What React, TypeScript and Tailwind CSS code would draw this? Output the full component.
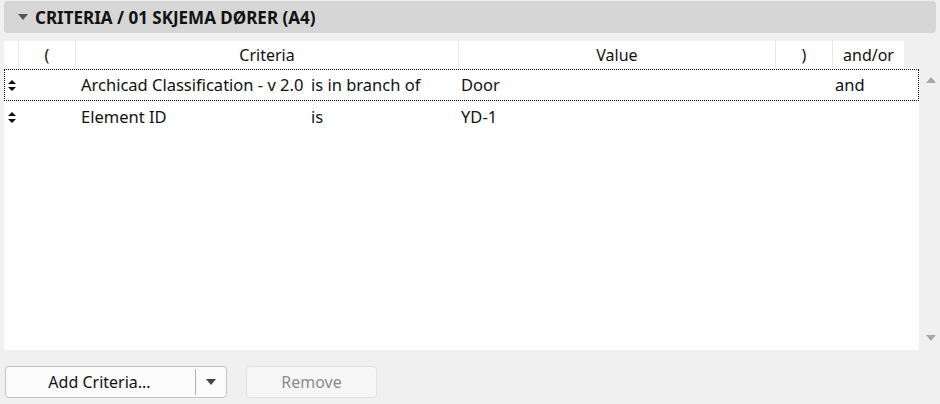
const font = { fontFamily: '"Noto Sans", "Open Sans", sans-serif' };

function SortIcon() {
  return (
    <svg width="8" height="11" viewBox="0 0 8 11" className="shrink-0">
      <path d="M4 0 L8 4 L0 4 Z" fill="#111" />
      <path d="M0 7 L8 7 L4 11 Z" fill="#111" />
    </svg>
  );
}

function Tri({ up, color = '#a8a8a8' }: { up?: boolean; color?: string }) {
  return (
    <svg width="10" height="6" viewBox="0 0 10 6">
      {up ? <path d="M5 0 L10 6 L0 6 Z" fill={color} /> : <path d="M0 0 L10 0 L5 6 Z" fill={color} />}
    </svg>
  );
}

const rows = [
  { criteria: 'Archicad Classification - v 2.0', op: 'is in branch of', value: 'Door', andor: 'and', focused: true },
  { criteria: 'Element ID', op: 'is', value: 'YD-1', andor: '', focused: false },
];

export default function App() {
  return (
    <div
      className="w-[940px] h-[404px] bg-[#f0f0f0] flex flex-col text-[16px] text-[#111] overflow-hidden"
      style={font}
    >
      <div className="px-[4px] pt-[1px]">
        <div className="h-[32px] rounded-[4px] bg-[#d6d6d6] flex items-center">
          <div className="w-[31px] flex justify-center pl-[6px]">
            <Tri color="#555" />
          </div>
          <span className="font-bold text-[17px] leading-none">CRITERIA / 01 SKJEMA DØRER (A4)</span>
        </div>
      </div>

      <div className="mt-[8px] pl-[4px] flex flex-col">
        {/* header */}
        <div className="w-[900px] h-[27px] bg-white flex items-center">
          <div className="w-[14px] h-full" />
          <div className="w-[57px] h-full border-l border-[#e6e6e6] flex items-center justify-center">(</div>
          <div className="w-[383px] h-full border-l border-[#e6e6e6] flex items-center justify-center">Criteria</div>
          <div className="w-[317px] h-full border-l border-[#e6e6e6] flex items-center justify-center">Value</div>
          <div className="w-[57px] h-full border-l border-[#e6e6e6] flex items-center justify-center">)</div>
          <div className="w-[72px] h-full border-l border-[#e6e6e6] flex items-center justify-center">and/or</div>
        </div>

        <div className="flex">
          <div className="w-[915px] h-[282px] bg-white pt-[1px] text-[16.5px]">
            {rows.map((r) => (
              <div
                key={r.criteria}
                className={`h-[32px] flex items-center ${r.focused ? 'border border-dotted border-black' : 'border border-transparent'}`}
              >
                <div className="w-[14px] flex justify-center">
                  <SortIcon />
                </div>
                <div className="w-[57px]" />
                <div className="w-[235px] pl-[5px] whitespace-nowrap">{r.criteria}</div>
                <div className="w-[150px] whitespace-nowrap">{r.op}</div>
                <div className="w-[374px] whitespace-nowrap">{r.value}</div>
                <div className="whitespace-nowrap">{r.andor}</div>
              </div>
            ))}
          </div>
          <div className="w-[21px] h-[282px] flex flex-col items-center justify-between py-[9px] pl-[2px]">
            <Tri up />
            <Tri />
          </div>
        </div>
      </div>

      <div className="mt-[16px] px-[5px] flex items-center gap-[19px]">
        <div className="w-[222px] h-[32px] rounded-[4px] border border-[#c4c4c4] bg-[#fbfbfb] flex items-center">
          <div className="flex-1 text-center pr-[2px]">Add Criteria...</div>
          <div className="w-px h-[26px] bg-[#b0b0b0]" />
          <div className="w-[30px] flex justify-center">
            <Tri color="#444" />
          </div>
        </div>
        <div className="w-[131px] h-[32px] rounded-[4px] border border-[#e2e2e2] bg-[#f6f6f6] flex items-center justify-center text-[#8c8c8c]">
          Remove
        </div>
      </div>
    </div>
  );
}
